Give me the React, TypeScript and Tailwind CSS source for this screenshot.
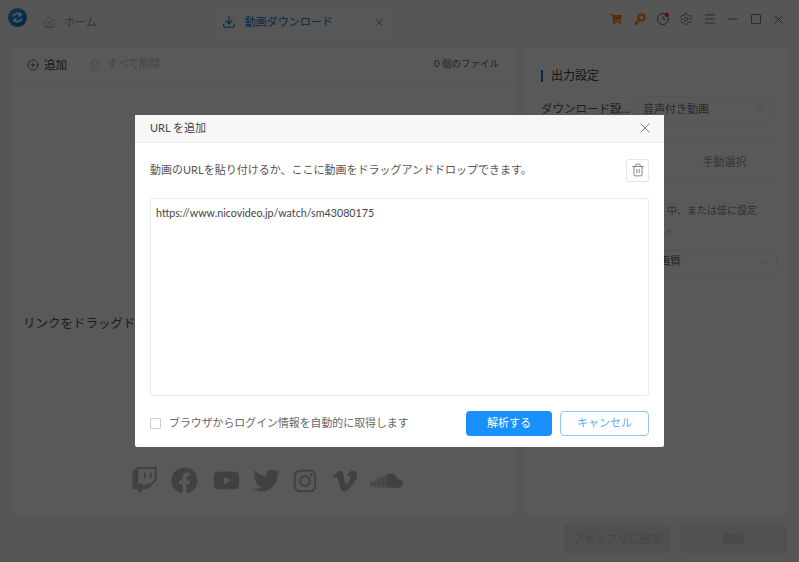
import { ChevronDown, CirclePlus, Download, House, Menu, Minus, Settings, Square, Trash2, X } from "lucide-react";
import { FaFacebook, FaInstagram, FaShoppingCart, FaSoundcloud, FaTwitch, FaTwitter, FaVimeoV, FaYoutube } from "react-icons/fa";

const font = { fontFamily: '"Lato", "Noto Sans CJK JP", sans-serif' };

const Logo = () => (
  <svg width="19" height="19" viewBox="0 0 19 19">
    <defs>
      <linearGradient id="logo" x1="0" y1="0" x2="1" y2="1">
        <stop offset="0" stopColor="#2aa4ee" />
        <stop offset="1" stopColor="#0b6fc4" />
      </linearGradient>
    </defs>
    <circle cx="9.5" cy="9.5" r="9.5" fill="url(#logo)" />
    <path d="M5 8.5C6 5.5 10 4.5 13 6.5L10.5 8.5" fill="none" stroke="#fff" strokeWidth="1.7" />
    <path d="M14 10.5C13 13.5 9 14.5 6 12.5L8.5 10.5" fill="none" stroke="#fff" strokeWidth="1.7" />
  </svg>
);

const KeyIcon = () => (
  <svg width="13" height="13" viewBox="0 0 13 13" className="text-[#f28a1e]">
    <circle cx="8.5" cy="4.5" r="3.2" fill="none" stroke="currentColor" strokeWidth="2.2" />
    <path d="M6.2 6.8 1.8 11.2M3 10l1.4 1.4" fill="none" stroke="currentColor" strokeWidth="2.2" />
  </svg>
);

const ClockIcon = () => (
  <svg width="14" height="14" viewBox="0 0 14 14" className="text-[#666]">
    <circle cx="7" cy="7" r="5.5" fill="none" stroke="currentColor" strokeWidth="1" />
    <path d="M7 4v3.2h2.6" fill="none" stroke="currentColor" strokeWidth="1" />
    <circle cx="10.8" cy="2.8" r="2.2" fill="#ff2d3c" />
  </svg>
);

const TitleBar = () => (
  <div className="flex h-[38px] items-center pl-2 pr-[9px]">
    <div className="-mt-1">
      <Logo />
    </div>
    <div className="ml-[16px] mt-[6px] flex items-center gap-[8px] text-[11px] text-[#999]">
      <House size={13} strokeWidth={1.3} />
      <span>ホーム</span>
    </div>
    <div className="ml-[116px] mt-[6px] flex h-[28px] w-[181px] items-center rounded-t-md bg-[#f7f9fb] pl-[9px]">
      <Download size={14} className="text-[#1677c9]" />
      <span className="ml-[9px] text-[11px] text-[#1677c9]">動画ダウンロード</span>
      <X size={11} strokeWidth={1.6} className="ml-[41px] text-[#555]" />
    </div>
    <div className="ml-auto flex items-center">
      <span className="flex w-[23px] justify-center pr-[1px]">
        <FaShoppingCart size={12} className="text-[#f28a1e]" />
      </span>
      <span className="flex w-[23px] justify-center">
        <KeyIcon />
      </span>
      <span className="flex w-[23px] justify-center">
        <ClockIcon />
      </span>
      <span className="flex w-[24px] justify-center">
        <Settings size={14} strokeWidth={1.2} className="text-[#666]" />
      </span>
      <span className="flex w-[23px] justify-center">
        <Menu size={14} strokeWidth={1.3} className="text-[#555]" />
      </span>
      <span className="flex w-[23px] justify-center">
        <Minus size={14} strokeWidth={1.3} className="text-[#444]" />
      </span>
      <span className="flex w-[23px] justify-center">
        <Square size={12} strokeWidth={1.4} className="text-[#444]" />
      </span>
      <span className="flex w-[23px] justify-center">
        <X size={15} strokeWidth={1.2} className="text-[#444]" />
      </span>
    </div>
  </div>
);

const LeftPanel = () => (
  <div className="flex h-[468px] w-[502px] flex-col rounded-md bg-white">
    <div className="flex h-[36px] items-center border-b border-[#f2f2f2] pl-[14px] pr-[16px] text-[11px]">
      <CirclePlus size={12} strokeWidth={1.4} className="text-[#333]" />
      <span className="ml-[5px] text-[11.5px] text-[#444]">追加</span>
      <Trash2 size={12} strokeWidth={1.3} className="ml-[22px] text-[#c8c8c8]" />
      <span className="ml-[6px] text-[11px] text-[#c8c8c8]">すべて削除</span>
      <span className="ml-auto text-[9.5px] text-[#666]">0 個のファイル</span>
    </div>
    <div className="flex flex-1 flex-col pl-[10px] pt-[231px]">
      <p className="whitespace-nowrap text-[12.5px] leading-[20px] text-[#555]">
        リンクをドラッグドロップしてダウンロードを開始します
      </p>
      <div className="ml-[108px] mt-[130px] flex items-center text-[#b9b9b9]">
        <FaTwitch size={27} />
        <FaFacebook size={27} className="ml-[13px]" />
        <FaYoutube size={27} className="ml-[15px]" />
        <FaTwitter size={27} className="ml-[13px]" />
        <FaInstagram size={26} className="ml-[12px]" />
        <FaVimeoV size={28} className="ml-[13px]" />
        <FaSoundcloud size={33} className="ml-[11px]" />
      </div>
    </div>
  </div>
);

const RightPanel = () => (
  <div className="flex h-[468px] w-[262px] flex-col rounded-md bg-white pl-4 pr-[10px] pt-[20px]">
    <div className="flex items-center gap-[8px] text-[12px] text-[#444]">
      <span className="h-[12px] w-[2px] bg-[#1677c9]" />
      <span>出力設定</span>
    </div>
    <div className="mt-[11px] flex items-center text-[11px] text-[#555]">
      <span className="w-[96px] shrink-0 whitespace-nowrap text-[11.5px]">ダウンロード設...</span>
      <div className="flex h-[26px] w-[134px] items-center rounded border border-[#f0f0f0] pl-[5px] pr-[3px] text-[#777]">
        音声付き動画
        <ChevronDown size={13} strokeWidth={1.3} className="ml-auto text-[#bbb]" />
      </div>
    </div>
    <div className="mt-[17px] flex h-[40px] border-y border-[#f2f2f2] text-[11px] text-[#999]">
      <span className="flex-1" />
      <span className="flex w-[110px] items-center justify-center pl-[5px] pt-[6px]">手動選択</span>
    </div>
    <p className="mt-[22px] pl-[126px] text-[10px] leading-[18px] text-[#888] whitespace-nowrap">
      中、または低に設定
      <br />
      。
    </p>
    <div className="ml-[72px] mt-[13px] flex h-[23px] w-[164px] items-center rounded border border-[#f0f0f0] pl-[45px] pr-[5px] text-[11px] text-[#666]">
      画質
      <ChevronDown size={13} strokeWidth={1.3} className="ml-auto text-[#bbb]" />
    </div>
  </div>
);

const Dialog = () => (
  <div className="flex h-[332px] w-[529px] flex-col rounded-[2px] bg-white">
    <div className="flex h-[28px] items-center justify-between border-b border-[#f0f0f0] bg-[#f7f7f7] pl-[15px] pr-[11px] text-[11px] text-[#444]">
      <span>URL を追加</span>
      <X size={16} strokeWidth={1} className="text-[#444]" />
    </div>
    <div className="flex flex-1 flex-col px-[15px] pt-[16px]">
      <div className="flex items-center justify-between text-[11px] text-[#555]">
        <span>動画のURLを貼り付けるか、ここに動画をドラッグアンドドロップできます。</span>
        <button className="flex h-[23px] w-[23px] items-center justify-center rounded-[2px] border border-[#e8e8e8]">
          <Trash2 size={14} strokeWidth={1.2} className="text-[#555]" />
        </button>
      </div>
      <div className="mt-[16px] h-[198px] rounded-[2px] border border-[#ececec] px-[5px] py-[6px] text-[10.7px] leading-[15px] text-[#444]">
        https://www.nicovideo.jp/watch/sm43080175
      </div>
      <div className="mt-[15px] flex items-center">
        <span className="h-[11px] w-[11px] rounded-[1px] border border-[#ccc]" />
        <span className="ml-[8px] text-[10.9px] text-[#666]">ブラウザからログイン情報を自動的に取得します</span>
        <button className="ml-auto h-[25px] w-[86px] rounded-[4px] bg-[#1890ff] pt-[1px] text-[11px] text-white">解析する</button>
        <button className="ml-2 h-[25px] w-[89px] rounded-[4px] border border-[#8cc6ff] pt-[1px] text-[11px] text-[#5aaefc]">キャンセル</button>
      </div>
    </div>
  </div>
);

export default function App() {
  return (
    <div className="relative flex h-[562px] w-[799px] flex-col overflow-hidden bg-[#f5f6f8]" style={font}>
      <TitleBar />
      <div className="mt-[9px] flex gap-[10px] pl-[13px]">
        <LeftPanel />
        <RightPanel />
      </div>
      <div className="mr-3 mt-[10px] flex justify-end gap-[9px]">
        <button className="h-[28px] w-[107px] rounded bg-[#e4e4e4] text-[11px] text-[#c4c4c4]">アセンブリに追加</button>
        <button className="h-[28px] w-[107px] rounded bg-[#e4e4e4] text-[11px] text-[#c4c4c4]">開始</button>
      </div>
      <div className="absolute inset-0 flex items-center justify-center bg-black/65">
        <div className="mb-[1px]">
          <Dialog />
        </div>
      </div>
    </div>
  );
}
